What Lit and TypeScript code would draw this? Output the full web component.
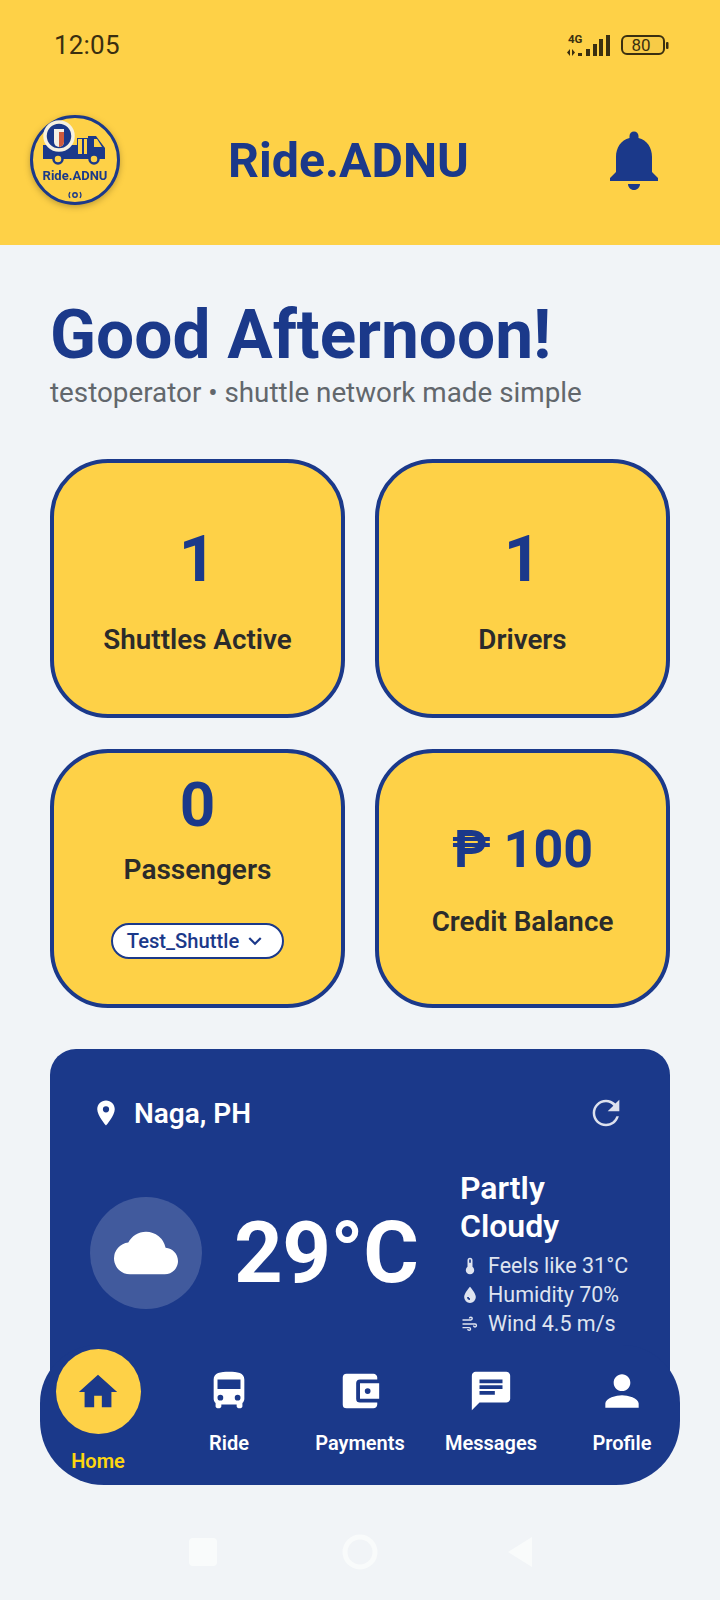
import { LitElement, html, css, svg } from "lit";
import { customElement } from "lit/decorators.js";

const I = (d: string, size: number, cls = "") =>
  html`<svg class=${cls} width=${size} height=${size} viewBox="0 0 24 24" fill="currentColor"><path d=${d}></path></svg>`;

const P = {
  bell: "M12 22c1.1 0 2-.9 2-2h-4c0 1.1.9 2 2 2zm6-6v-5c0-3.07-1.63-5.64-4.5-6.32V4c0-.83-.67-1.5-1.5-1.5s-1.5.67-1.5 1.5v.68C7.64 5.36 6 7.92 6 11v5l-2 2v1h16v-1l-2-2z",
  pin: "M12 2C8.13 2 5 5.13 5 9c0 5.25 7 13 7 13s7-7.75 7-13c0-3.87-3.13-7-7-7zm0 9.5a2.5 2.5 0 1 1 0-5 2.5 2.5 0 0 1 0 5z",
  refresh: "M17.65 6.35A7.958 7.958 0 0 0 12 4c-4.42 0-7.99 3.58-7.99 8s3.57 8 7.99 8c3.73 0 6.84-2.55 7.73-6h-1.5A6.5 6.5 0 0 1 12 18.5c-3.59 0-6.5-2.91-6.5-6.5S8.41 5.5 12 5.5c1.8 0 3.3.75 4.4 2.1L13 11h7V4l-2.35 2.35z",
  cloud: "M19.35 10.04A7.49 7.49 0 0 0 12 4C9.11 4 6.6 5.64 5.35 8.04A5.994 5.994 0 0 0 0 14c0 3.31 2.69 6 6 6h13c2.76 0 5-2.24 5-5 0-2.64-2.05-4.78-4.65-4.96z",
  home: "M10 20v-6h4v6h5v-8h3L12 3 2 12h3v8z",
  bus: "M4 16c0 .88.39 1.67 1 2.22V20c0 .55.45 1 1 1h1c.55 0 1-.45 1-1v-1h8v1c0 .55.45 1 1 1h1c.55 0 1-.45 1-1v-1.78c.61-.55 1-1.34 1-2.22V6c0-3.5-3.58-4-8-4s-8 .5-8 4v10zm3.5 1a1.5 1.5 0 1 1 0-3 1.5 1.5 0 0 1 0 3zm9 0a1.5 1.5 0 1 1 0-3 1.5 1.5 0 0 1 0 3zM18 11H6V6h12v5z",
  wallet: "M21 18v1c0 1.1-.9 2-2 2H5a2 2 0 0 1-2-2V5a2 2 0 0 1 2-2h14c1.1 0 2 .9 2 2v1h-9a2 2 0 0 0-2 2v8a2 2 0 0 0 2 2h9zm-9-2h10V8H12v8zm4-2.5a1.5 1.5 0 1 1 0-3 1.5 1.5 0 0 1 0 3z",
  msg: "M20 2H4c-1.1 0-1.99.9-1.99 2L2 22l4-4h14c1.1 0 2-.9 2-2V4c0-1.1-.9-2-2-2zM6 9h12v2H6V9zm8 5H6v-2h8v2zm4-6H6V6h12v2z",
  person: "M12 12c2.21 0 4-1.79 4-4s-1.79-4-4-4-4 1.79-4 4 1.79 4 4 4zm0 2c-2.67 0-8 1.34-8 4v2h16v-2c0-2.66-5.33-4-8-4z",
  chev: "M7.41 8.59 12 13.17l4.59-4.58L18 10l-6 6-6-6z",
  thermo: "M15 13V5a3 3 0 0 0-6 0v8a5 5 0 1 0 6 0zm-3-9a1 1 0 0 1 1 1v3h-2V5a1 1 0 0 1 1-1z",
  drop: "M12 2S5 9.5 5 14.5a7 7 0 0 0 14 0C19 9.5 12 2 12 2zm0 16a3.5 3.5 0 0 1-3.5-3.5h2A1.5 1.5 0 0 0 12 16v2z",
  wind: "M3 8h10a2.5 2.5 0 1 0-2.5-2.5h1.7A.8.8 0 1 1 13 6.3H3V8zm0 3.2h15a2.6 2.6 0 1 1-2.6 2.6h1.7a.9.9 0 1 0 .9-.9H3v-1.7zM3 15.5h8a2.5 2.5 0 1 1-2.5 2.5h1.7a.8.8 0 1 0 .8-.8H3v-1.7z",
};

@customElement("app-root")
export class AppRoot extends LitElement {
  static styles = css`
    :host { display: block; width: 720px; height: 1600px; position: relative; overflow: hidden; background: #f1f4f7; font-family: Roboto, "Noto Sans", sans-serif; color: #2b2b2b; }
    .top { background: #fed147; height: 245px; display: flex; flex-direction: column; }
    .status { height: 90px; flex: none; display: flex; align-items: center; justify-content: space-between; padding: 0 51px 0 54px; color: #3a2f10; box-sizing: border-box; }
    .time { font-size: 26px; letter-spacing: 0.2px; }
    .sig { display: flex; align-items: center; gap: 8px; }
    .bar { height: 90px; flex: none; display: flex; align-items: center; justify-content: space-between; padding: 0 50px 0 30px; color: #1b398a; margin-top: 25px; }
    .logo { width: 90px; height: 90px; flex: none; filter: drop-shadow(0 2px 3px rgba(0,0,0,.25)); }
    .title { font-size: 48.3px; font-weight: 700; margin-right: 21px; }
    main { padding: 53px 50px 0; }
    h1 { margin: 0; font-size: 67.6px; line-height: 74px; font-weight: 700; color: #1b398a; }
    .sub { font-size: 27.8px; line-height: 32px; color: #62676c; margin-top: 5px; }
    .grid { display: grid; grid-template-columns: 295px 295px; gap: 31px 30px; margin-top: 50px; }
    .card { box-sizing: border-box; height: 259px; background: #fed147; border: 4px solid #1b398a; border-radius: 58px; display: flex; flex-direction: column; align-items: center; text-align: center; }
    .num { font-size: 65px; font-weight: 700; color: #1b398a; line-height: 76px; }
    .lbl { font-size: 27.8px; font-weight: 600; color: #2b2b2b; line-height: 34px; white-space: nowrap; }
    .c1 { padding-top: 58px; } .c1 .lbl { margin-top: 26px; }
    .c3 { padding-top: 14px; } .c3 .lbl { margin-top: 10px; font-size: 28px; } .c3 .num { font-size: 62px; }
    .c4 { padding-top: 65px; } .c4 .num { font-size: 52px; line-height: 64px; } .c4 .lbl { margin-top: 23px; }
    .pick { margin-top: 36px; box-sizing: border-box; width: 173px; height: 36px; border: 2px solid #1b398a; border-radius: 18px; background: #fff; color: #1b398a; font-size: 20.2px; font-weight: 500; display: flex; align-items: center; justify-content: center; gap: 3px; }
    .weather { margin-top: 41px; background: #1b398a; border-radius: 26px 26px 0 0; height: 340px; color: #fff; padding: 0 40px; box-sizing: border-box; }
    .wtop { display: flex; align-items: center; justify-content: space-between; height: 128px; padding: 0 4px 0 1px; box-sizing: border-box; }
    .loc { display: flex; align-items: center; gap: 13px; font-size: 28px; font-weight: 600; }
    .rf { color: rgba(255,255,255,.85); }
    .wmain { display: flex; align-items: flex-start; margin-top: -10px; }
    .circ { width: 112px; height: 112px; flex: none; border-radius: 50%; background: rgba(255,255,255,.17); display: flex; align-items: center; justify-content: center; margin-top: 30px; }
    .temp { font-size: 85px; font-weight: 700; line-height: 100px; margin: 36px 0 0 32px; width: 226px; flex: none; letter-spacing: -0.5px; }
    .cond { font-size: 32px; font-weight: 600; line-height: 38px; margin-top: 2px; }
    .d { display: flex; align-items: center; gap: 8px; font-size: 21.5px; line-height: 29px; color: #dfe4f0; white-space: nowrap; }
    .d svg { flex: none; }
    .dl { margin-top: 6px; }
    .nav { position: absolute; left: 40px; top: 1345px; width: 640px; height: 140px; border-radius: 58px 58px 64px 64px; background: #1b398a; display: grid; grid-template-columns: repeat(5, 131px); justify-content: center; color: #fff; text-align: center; box-sizing: border-box; }
    .it { display: flex; flex-direction: column; align-items: center; padding-top: 23px; font-size: 20px; font-weight: 600; }
    .it span { margin-top: 17px; line-height: 24px; }
    .it.on { padding-top: 4px; color: #fdd60f; }
    .it.on .dot { width: 85px; height: 85px; border-radius: 50%; background: #fed147; color: #1b398a; display: flex; align-items: center; justify-content: center; }
    .it.on span { margin-top: 15px; }
    .it.pf { padding-top: 21px; }
    .it.pf span { margin-top: 15px; }
    .sys { position: absolute; left: 0; right: 0; top: 1532px; display: flex; justify-content: center; align-items: center; }
    .sys svg { display: block; }
  `;

  render() {
    return html`
      <div class="top">
        <div class="status">
          <div class="time">12:05</div>
          <div class="sig">
            <svg width="48" height="24" viewBox="0 0 48 24" fill="#3a2f10">
              <text x="3" y="10" font-size="11.5" font-weight="700" font-family="Roboto">4G</text>
              <path d="M5 16v7L2 19.5zM7 16v7l3-3.5z"></path>
              <rect x="13" y="20" width="4" height="3"></rect><rect x="21" y="16" width="4" height="7"></rect><rect x="28" y="11" width="4" height="12"></rect><rect x="34" y="6" width="4" height="17"></rect><rect x="41" y="2" width="4" height="21"></rect>
            </svg>
            <svg width="48" height="22" viewBox="0 0 48 22">
              <rect x="1" y="2" width="42" height="18" rx="5" fill="#f7cb47" stroke="#3a2f10" stroke-width="2"></rect>
              <rect x="45" y="8" width="2.5" height="7" rx="1" fill="#3a2f10"></rect>
              <text x="20" y="17" text-anchor="middle" font-size="17" font-family="Roboto" fill="#3a2f10">80</text>
            </svg>
          </div>
        </div>
        <div class="bar">
          ${this.logo()}
          <div class="title">Ride.ADNU</div>
          ${I(P.bell, 72, "bell")}
        </div>
      </div>
      <main>
        <h1>Good Afternoon!</h1>
        <div class="sub">testoperator • shuttle network made simple</div>
        <div class="grid">
          <div class="card c1"><div class="num">1</div><div class="lbl">Shuttles Active</div></div>
          <div class="card c1"><div class="num">1</div><div class="lbl">Drivers</div></div>
          <div class="card c3"><div class="num">0</div><div class="lbl">Passengers</div>
            <div class="pick">Test_Shuttle ${I(P.chev, 26)}</div></div>
          <div class="card c4"><div class="num">₱ 100</div><div class="lbl">Credit Balance</div></div>
        </div>
        <div class="weather">
          <div class="wtop">
            <div class="loc">${I(P.pin, 30)}Naga, PH</div>
            ${I(P.refresh, 40, "rf")}
          </div>
          <div class="wmain">
            <div class="circ">${I(P.cloud, 64)}</div>
            <div class="temp">29°C</div>
            <div>
              <div class="cond">Partly<br />Cloudy</div>
              <div class="dl">
                <div class="d">${I(P.thermo, 20)}Feels like 31°C</div>
                <div class="d">${I(P.drop, 20)}Humidity 70%</div>
                <div class="d">${I(P.wind, 20)}Wind 4.5 m/s</div>
              </div>
            </div>
          </div>
        </div>
      </main>
      <nav class="nav">
        <div class="it on"><div class="dot">${I(P.home, 46)}</div><span>Home</span></div>
        <div class="it">${I(P.bus, 46)}<span>Ride</span></div>
        <div class="it">${I(P.wallet, 46)}<span>Payments</span></div>
        <div class="it">${I(P.msg, 46)}<span>Messages</span></div>
        <div class="it pf">${I(P.person, 50)}<span>Profile</span></div>
      </nav>
      <div class="sys">
        <svg width="400" height="40" viewBox="0 0 400 40" fill="#f9fbfb">
          <rect x="29" y="6" width="28" height="28" rx="4"></rect>
          <circle cx="200" cy="20" r="15" fill="none" stroke="#f9fbfb" stroke-width="5"></circle>
          <path d="M348 20 372 5v30z"></path>
        </svg>
      </div>
    `;
  }

  logo() {
    return html`<svg class="logo" viewBox="0 0 90 90">
      <circle cx="45" cy="45" r="43.5" fill="#fed147" stroke="#1b398a" stroke-width="3"></circle>
      ${svg`
      <path d="M13 30h45V21h8l9 12v11H13z" fill="#1b398a"></path>
      <rect x="47" y="23" width="11" height="17" fill="#1b398a"></rect>
      <rect x="48" y="24" width="4" height="15" fill="#fed147"></rect><rect x="54" y="24" width="3" height="15" fill="#fed147"></rect>
      <path d="M64 24h3l5 8h-8z" fill="#fed147"></path>
      <circle cx="28" cy="44" r="4.5" fill="#fed147" stroke="#1b398a" stroke-width="2.5"></circle>
      <circle cx="64" cy="44" r="4.5" fill="#fed147" stroke="#1b398a" stroke-width="2.5"></circle>
      <circle cx="29" cy="21" r="14" fill="#1b398a" stroke="#f6f1e0" stroke-width="3.5"></circle>
      <path d="M24 14h10v13a5 5 0 0 1-10 0z" fill="#f4f0e6"></path>
      <path d="M29 17h5v10a5 5 0 0 1-5 5z" fill="#cf5a3c"></path>
      <text x="45" y="65" text-anchor="middle" font-size="13" font-weight="700" font-family="Roboto" fill="#1b398a">Ride.ADNU</text>
      <circle cx="45" cy="80" r="2.2" fill="none" stroke="#1b398a" stroke-width="1.4"></circle>
      <path d="M40 77q-2 3 0 6M50 77q2 3 0 6" fill="none" stroke="#1b398a" stroke-width="1.2"></path>
      `}
    </svg>`;
  }
}
